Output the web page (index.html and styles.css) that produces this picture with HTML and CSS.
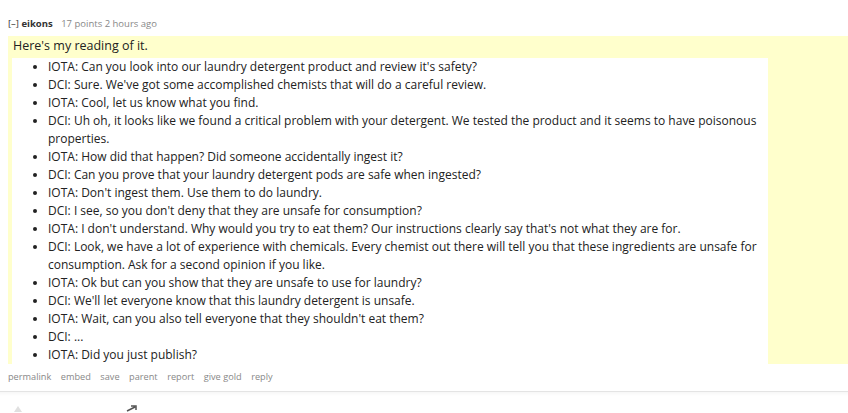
FILE: index.html
```
<!DOCTYPE html>
<html lang="en">
<head>
<meta charset="utf-8">
<title>Comment</title>
<link rel="stylesheet" href="styles.css">
</head>
<body>
<div class="comment">
  <p class="tagline"><span class="expand">[–]</span> <span class="author">eikons</span> <span class="meta">17 points 2 hours ago</span></p>
  <div class="body">
    <p class="intro">Here's my reading of it.</p>
    <ul class="dialog">
      <li>IOTA: Can you look into our laundry detergent product and review it's safety?</li>
      <li>DCI: Sure. We've got some accomplished chemists that will do a careful review.</li>
      <li>IOTA: Cool, let us know what you find.</li>
      <li>DCI: Uh oh, it looks like we found a critical problem with your detergent. We tested the product and it seems to have poisonous properties.</li>
      <li>IOTA: How did that happen? Did someone accidentally ingest it?</li>
      <li>DCI: Can you prove that your laundry detergent pods are safe when ingested?</li>
      <li>IOTA: Don't ingest them. Use them to do laundry.</li>
      <li>DCI: I see, so you don't deny that they are unsafe for consumption?</li>
      <li>IOTA: I don't understand. Why would you try to eat them? Our instructions clearly say that's not what they are for.</li>
      <li>DCI: Look, we have a lot of experience with chemicals. Every chemist out there will tell you that these ingredients are unsafe for consumption. Ask for a second opinion if you like.</li>
      <li>IOTA: Ok but can you show that they are unsafe to use for laundry?</li>
      <li>DCI: We'll let everyone know that this laundry detergent is unsafe.</li>
      <li>IOTA: Wait, can you also tell everyone that they shouldn't eat them?</li>
      <li>DCI: ...</li>
      <li>IOTA: Did you just publish?</li>
    </ul>
  </div>
  <ul class="buttons">
    <li>permalink</li><li>embed</li><li>save</li><li>parent</li><li>report</li><li>give gold</li><li>reply</li>
  </ul>
</div>
<div class="next">
  <svg class="arrow" width="10" height="8" viewBox="0 0 10 8"><path d="M5 1 L9 7 H1 Z" fill="#e0e0e0"/></svg>
  <svg class="mark" width="14" height="8" viewBox="0 0 14 8"><path d="M2 6 L10 2 M6 1 H11 V5" stroke="#555" stroke-width="1.5" fill="none"/></svg>
</div>
</body>
</html>
```
FILE: styles.css
```
html, body {
  margin: 0;
  padding: 0;
  background: #fff;
}
body {
  font-family: "Open Sans", "Noto Sans", sans-serif;
  color: #222;
  overflow: hidden;
  width: 848px;
  height: 413px;
}
.comment {
  padding: 16px 0 0 8px;
}
.tagline {
  margin: 0;
  height: 20px;
  line-height: 16px;
  font-size: 9.5px;
  color: #888;
}
.expand {
  color: #333;
}
.author {
  color: #333;
  font-weight: bold;
  margin-right: 6px;
}
.body {
  background: #ffffcc;
}
.intro {
  margin: 0;
  padding: 0 5px;
  height: 22px;
  line-height: 20px;
  font-size: 12.5px;
}
.dialog {
  margin: 0 0 0 4px;
  padding: 0 0 0 36px;
  width: 720px;
  background: #fff;
  font-size: 12px;
  line-height: 18px;
}
.buttons {
  list-style: none;
  margin: 0;
  padding: 5px 0 0;
  display: flex;
  gap: 9.5px;
  font-size: 9.2px;
  line-height: 16px;
  color: #888;
}
.next {
  margin-top: 6px;
  border-top: 1px solid #e4e4e4;
  background: linear-gradient(#f7f7f7, #fff 4px);
  display: flex;
  align-items: flex-end;
  height: 21px;
  padding-left: 13px;
  gap: 102px;
}
.arrow, .mark {
  display: block;
}
```
